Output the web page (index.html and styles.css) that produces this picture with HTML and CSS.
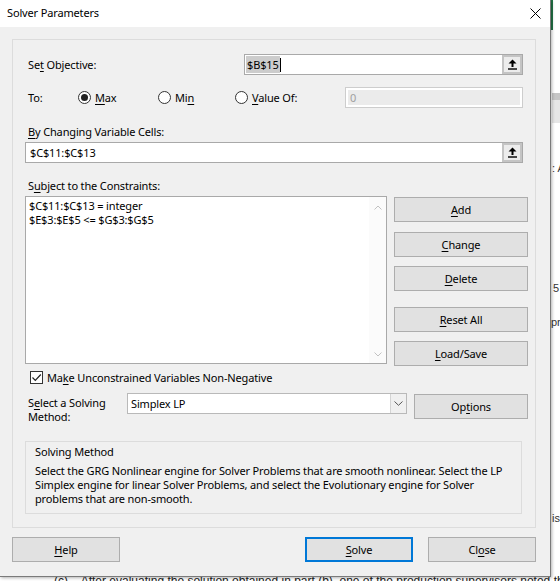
FILE: index.html
```html
<!DOCTYPE html>
<html lang="en">
<head>
  <meta charset="UTF-8" />
  <title>Solver Parameters</title>
  <link rel="stylesheet" href="styles.css">
</head>
<body>
  <!-- what shows of the worksheet behind the dialog -->
  <div class="backdrop">
    <div class="bd-green"></div>
    <div class="bd-band bd-band1"></div>
    <div class="bd-band bd-band2"></div>
    <span class="bd-text bd-t1">: A</span>
    <span class="bd-text bd-t2">5</span>
    <span class="bd-text bd-t3">pr</span>
    <span class="bd-text bd-t4">is</span>
    <div class="bd-doc">(c)&nbsp;&nbsp;&nbsp; After evaluating the solution obtained in part (b), one of the production supervisors noted that</div>
  </div>

  <div class="dialog">
    <div class="titlebar">
      <span class="title">Solver Parameters</span>
      <svg class="close" width="11" height="11" viewBox="0 0 11 11"><path d="M0.5 0.5 L10.5 10.5 M10.5 0.5 L0.5 10.5" stroke="#000" stroke-width="1"/></svg>
    </div>

    <div class="group">
      <div class="row row-objective">
        <div class="lbl lbl-objective">Se<u>t</u> Objective:</div>
        <div class="field field-objective">
          <div class="field-text"><span class="sel">$B$15</span><span class="caret"></span></div>
          <div class="ref">
            <svg width="11" height="11" viewBox="0 0 11 11"><path d="M5.5 0.5 L9.5 4.5 H6.5 V8 H4.5 V4.5 H1.5 Z" fill="#000"/><rect x="1" y="9.3" width="9" height="1.4" fill="#000"/></svg>
          </div>
        </div>
      </div>

      <div class="row row-to">
        <div class="lbl lbl-to">To:</div>
        <div class="radio radio-max"><span class="radio-dot checked"></span><span><u>M</u>ax</span></div>
        <div class="radio radio-min"><span class="radio-dot"></span><span>Mi<u>n</u></span></div>
        <div class="radio radio-value"><span class="radio-dot"></span><span><u>V</u>alue Of:</span></div>
        <div class="field field-value">0</div>
      </div>

      <div class="caption cap-changing"><u>B</u>y Changing Variable Cells:</div>
      <div class="field field-changing">
        <div class="field-text pad4">$C$11:$C$13</div>
        <div class="ref">
          <svg width="11" height="11" viewBox="0 0 11 11"><path d="M5.5 0.5 L9.5 4.5 H6.5 V8 H4.5 V4.5 H1.5 Z" fill="#000"/><rect x="1" y="9.3" width="9" height="1.4" fill="#000"/></svg>
        </div>
      </div>

      <div class="caption cap-subject">S<u>u</u>bject to the Constraints:</div>
      <div class="constraints-row">
        <div class="listbox">
          <div class="list-items">
            <div>$C$11:$C$13 = integer</div>
            <div>$E$3:$E$5 &lt;= $G$3:$G$5</div>
          </div>
          <div class="scroll">
            <svg width="8" height="5" viewBox="0 0 8 5"><path d="M0.5 4.5 L4 1 L7.5 4.5" stroke="#c2c2c2" fill="none"/></svg>
            <svg width="8" height="5" viewBox="0 0 8 5"><path d="M0.5 0.5 L4 4 L7.5 0.5" stroke="#c2c2c2" fill="none"/></svg>
          </div>
        </div>
        <div class="side-buttons">
          <div class="btn"><span><u>A</u>dd</span></div>
          <div class="btn btn-change"><span><u>C</u>hange</span></div>
          <div class="btn btn-delete"><span><u>D</u>elete</span></div>
          <div class="btn btn-reset"><span><u>R</u>eset All</span></div>
          <div class="btn btn-load"><span><u>L</u>oad/Save</span></div>
        </div>
      </div>

      <div class="row row-check">
        <span class="checkbox">
          <svg width="11" height="11" viewBox="0 0 11 11"><path d="M1.5 5.5 L4.3 8.3 L9.8 2.5" stroke="#222" stroke-width="1.2" fill="none"/></svg>
        </span>
        <span>Ma<u>k</u>e Unconstrained Variables Non-Negative</span>
      </div>

      <div class="row row-method">
        <div class="lbl lbl-method">S<u>e</u>lect a Solving<br>Method:</div>
        <div class="select">
          <div class="select-text">Simplex LP</div>
          <div class="select-arrow">
            <svg width="9" height="5" viewBox="0 0 9 5"><path d="M0.5 0.5 L4.5 4.3 L8.5 0.5" stroke="#555" fill="none"/></svg>
          </div>
        </div>
        <div class="btn btn-options"><span>Op<u>t</u>ions</span></div>
      </div>

      <div class="method-box">
        <div class="method-title">Solving Method</div>
        <p class="method-text">Select the GRG Nonlinear engine for Solver Problems that are smooth nonlinear. Select the LP<br>Simplex engine for linear Solver Problems, and select the Evolutionary engine for Solver<br>problems that are non-smooth.</p>
      </div>
    </div>

    <div class="footer">
      <div class="btn btn-foot"><span><u>H</u>elp</span></div>
      <div class="btn btn-foot btn-solve"><span><u>S</u>olve</span></div>
      <div class="btn btn-foot btn-close"><span>Cl<u>o</u>se</span></div>
    </div>
  </div>
</body>
</html>
```

FILE: styles.css
```css
* {
  box-sizing: border-box;
}
body {
  margin: 0;
  width: 560px;
  height: 581px;
  overflow: hidden;
  position: relative;
  background: #fff;
  font-family: "Noto Sans", "Open Sans", sans-serif;
  font-size: 11px;
  letter-spacing: -0.15px;
  color: #000;
}
u {
  text-decoration-thickness: 1px;
  text-underline-offset: 2px;
}

/* worksheet behind the window */
.backdrop {
  position: absolute;
  inset: 0;
}
.bd-green {
  position: absolute;
  left: 551px;
  top: 0;
  width: 2px;
  height: 30px;
  background: #217346;
}
.bd-band {
  position: absolute;
  left: 552px;
  width: 8px;
}
.bd-band1 {
  top: 93px;
  height: 7px;
  background: #c6c6c6;
}
.bd-band2 {
  top: 100px;
  height: 23px;
  background: #e6e6e6;
}
.bd-text {
  position: absolute;
  left: 552px;
  font-family: "Liberation Sans", sans-serif;
  font-size: 11px;
  line-height: 12px;
  letter-spacing: 0;
  white-space: nowrap;
  color: #333;
}
.bd-t1 { top: 162px; }
.bd-t2 { top: 282px; left: 553px; }
.bd-t3 { top: 316px; left: 551px; }
.bd-t4 { top: 512px; }
.bd-doc {
  position: absolute;
  left: 54px;
  top: 574px;
  font-family: "Liberation Sans", sans-serif;
  font-size: 12px;
  line-height: 14px;
  letter-spacing: 0;
  white-space: nowrap;
  color: #222;
}

/* dialog window */
.dialog {
  position: absolute;
  left: 0;
  top: 0;
  width: 551px;
  height: 577px;
  background: #f0f0f0;
  border-right: 1px solid #7a7a7a;
  border-bottom: 1px solid #7a7a7a;
  box-shadow: 1px 1px 3px rgba(0,0,0,0.3);
}
.titlebar {
  height: 27px;
  background: #fff;
  display: flex;
  align-items: center;
  justify-content: space-between;
  padding: 0 9px 3px 7px;
}
.close {
  margin-top: 3px;
}
.group {
  margin: 12px 14px 0 12px;
  border: 1px solid #dcdcdc;
  padding: 0 0 13px 12px;
}
.row {
  display: flex;
  align-items: center;
}
.lbl, .caption {
  padding-left: 3px;
}
.caption {
  line-height: 16px;
}
.field {
  height: 21px;
  border: 1px solid #a9a9a9;
  background: #fff;
  display: flex;
}
.field-text {
  flex: 1;
  line-height: 19px;
  padding-left: 1px;
  white-space: nowrap;
}
.pad4 {
  padding-left: 4px;
}
.sel {
  background: #cccccc;
  padding: 1px;
}
.caret {
  display: inline-block;
  width: 1px;
  height: 14px;
  background: #000;
  vertical-align: -3px;
}
.ref {
  width: 20px;
  background: #ececec;
  border: 2px solid #c4c4c4;
  display: flex;
  align-items: center;
  justify-content: center;
}

.row-objective {
  margin-top: 14px;
}
.lbl-objective {
  width: 219px;
}
.field-objective {
  width: 279px;
}

.row-to {
  margin-top: 12px;
  height: 21px;
}
.lbl-to {
  width: 53px;
}
.radio {
  display: flex;
  align-items: center;
  gap: 4px;
}
.radio-max { width: 80px; }
.radio-min { width: 77px; }
.radio-value { width: 110px; }
.radio-dot {
  width: 13px;
  height: 13px;
  border: 1px solid #333;
  border-radius: 50%;
  background: #fff;
  display: flex;
  align-items: center;
  justify-content: center;
}
.radio-dot.checked::after {
  content: "";
  width: 7px;
  height: 7px;
  border-radius: 50%;
  background: #222;
}
.field-value {
  width: 178px;
  background: #ebebeb;
  border-color: #cdcdcd;
  box-shadow: inset 0 0 0 2px #fff;
  color: #a0a0a0;
  line-height: 19px;
  padding-left: 4px;
}

.cap-changing {
  margin-top: 16px;
}
.field-changing {
  margin-top: 2px;
  width: 498px;
}
.cap-subject {
  margin-top: 15px;
}

.constraints-row {
  margin-top: 2px;
  display: flex;
  align-items: flex-start;
}
.listbox {
  width: 362px;
  height: 168px;
  border: 1px solid #a9a9a9;
  background: #fff;
  display: flex;
}
.list-items {
  flex: 1;
  padding: 2px 0 0 3px;
  line-height: 14px;
  white-space: nowrap;
}
.scroll {
  width: 17px;
  background: #fbfbfb;
  display: flex;
  flex-direction: column;
  justify-content: space-between;
  align-items: center;
  padding: 8px 0 6px;
}
.side-buttons {
  margin-left: 7px;
  width: 134px;
  padding-top: 1px;
  display: flex;
  flex-direction: column;
}
.btn {
  height: 25px;
  background: #e1e1e1;
  border: 1px solid #adadad;
  display: flex;
  align-items: center;
  justify-content: center;
  white-space: nowrap;
}
.btn-change { margin-top: 10px; }
.btn-delete { margin-top: 9px; }
.btn-reset { margin-top: 16px; }
.btn-load { margin-top: 9px; }

.row-check {
  margin-top: 3px;
  height: 16px;
  padding-left: 5px;
  gap: 4px;
}
.checkbox {
  width: 13px;
  height: 13px;
  border: 1px solid #333;
  background: #fff;
  display: flex;
  align-items: center;
  justify-content: center;
}

.row-method {
  margin-top: 8px;
  align-items: flex-start;
}
.lbl-method {
  width: 102px;
  margin-top: 3px;
  line-height: 14px;
}
.select {
  width: 280px;
  height: 21px;
  border: 1px solid #b9b9b9;
  background: #fff;
  display: flex;
}
.select-text {
  flex: 1;
  padding-left: 3px;
  line-height: 19px;
}
.select-arrow {
  width: 16px;
  background: #f0f0f0;
  border-left: 1px solid #d4d4d4;
  display: flex;
  align-items: center;
  justify-content: center;
}
.btn-options {
  margin-left: 7px;
  margin-top: 1px;
  width: 114px;
}

.method-box {
  margin-top: 17px;
  width: 497px;
  border: 1px solid #dcdcdc;
  padding: 3px 10px 7px 9px;
}
.method-title {
  line-height: 14px;
}
.method-text {
  margin: 5px 0 0;
  line-height: 14px;
  white-space: nowrap;
}

.footer {
  display: flex;
  margin-top: 9px;
  padding: 0 14px 0 12px;
}
.btn-foot {
  width: 108px;
}
.btn-solve {
  margin-left: auto;
  border: 2px solid #0078d7;
}
.btn-close {
  margin-left: 15px;
}
```
